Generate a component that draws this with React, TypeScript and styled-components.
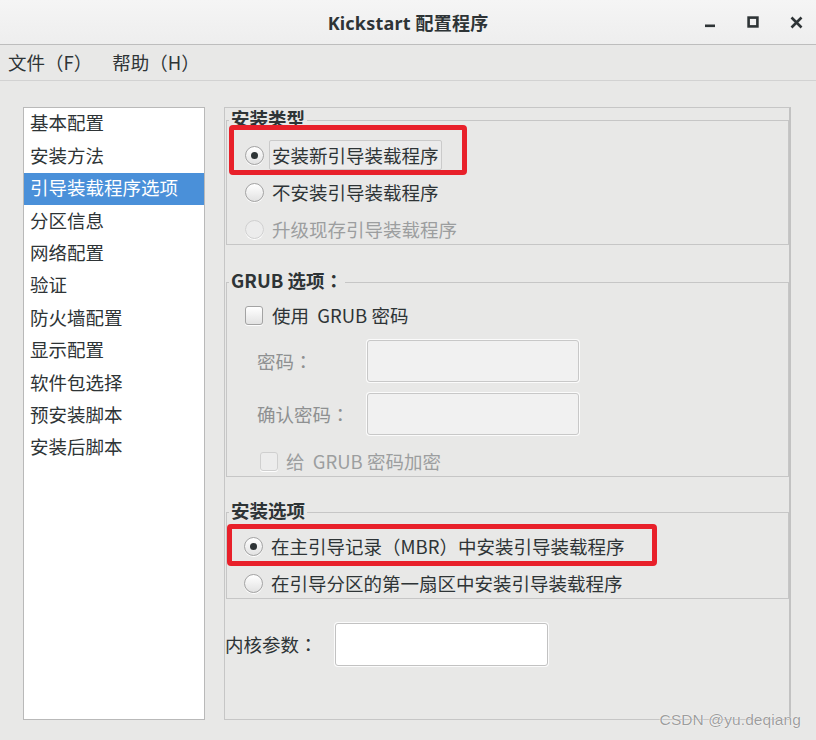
import React from 'react';
import styled, { createGlobalStyle } from 'styled-components';

const GlobalStyle = createGlobalStyle`
  html, body { margin: 0; padding: 0; }
  body {
    background: #e8e8e7;
    font-family: "Noto Sans CJK SC", "Noto Sans", sans-serif;
    color: #2e3436;
  }
`;

const Window = styled.div`
  position: relative;
  width: 816px;
  height: 740px;
  display: flex;
  flex-direction: column;
  background: #e8e8e7;
  overflow: hidden;
`;

const TitleBar = styled.div`
  flex: none;
  height: 44px;
  display: grid;
  grid-template-columns: 1fr auto 1fr;
  align-items: center;
  background: linear-gradient(#f5f5f5, #eeeeee);
  border-bottom: 1px solid #bdbdbd;
`;

const TitleText = styled.div`
  grid-column: 2;
  font-family: "Noto Sans", "Noto Sans CJK SC", sans-serif;
  font-size: 18px;
  font-weight: 700;
  color: #2e3436;
  letter-spacing: 0.2px;
`;

const Controls = styled.div`
  grid-column: 3;
  justify-self: end;
  display: flex;
  align-items: center;
  gap: 19px;
  padding-right: 8px;
`;

const ControlButton = styled.span`
  width: 24px;
  height: 24px;
  display: flex;
  align-items: center;
  justify-content: center;
  color: #2e3436;
`;

const MenuBar = styled.div`
  flex: none;
  height: 35px;
  display: flex;
  align-items: center;
  gap: 20px;
  padding-left: 8px;
  border-bottom: 1px solid #d2d2d2;
`;

const MenuItem = styled.span`
  font-size: 18.5px;
  line-height: 1;
  color: #2e3436;
`;

const Body = styled.div`
  display: flex;
  gap: 19px;
  padding: 26px 0 0 23px;
`;

const NavList = styled.div`
  width: 182px;
  height: 613px;
  box-sizing: border-box;
  background: #ffffff;
  border: 1px solid #b9b9b9;
  display: flex;
  flex-direction: column;
`;

const NavItem = styled.div<{ $selected?: boolean }>`
  height: 32.4px;
  box-sizing: border-box;
  flex: none;
  display: flex;
  align-items: center;
  padding: 0 0 3px 6px;
  font-size: 18.5px;
  line-height: 1;
  color: ${p => (p.$selected ? '#ffffff' : '#2e3436')};
  background: ${p => (p.$selected ? '#4a90d9' : 'transparent')};
`;

const Panel = styled.div`
  width: 567px;
  height: 613px;
  box-sizing: border-box;
  border: 1px solid #c6c6c6;
  border-right: 2px solid #c2c2c2;
  display: flex;
  flex-direction: column;
`;

const Frame = styled.fieldset<{ $mt?: number }>`
  margin: ${p => p.$mt ?? 0}px 0 0 1px;
  padding: 0;
  border: 1px solid #c6c6c6;
  min-width: 0;
`;

const Legend = styled.legend`
  margin-left: 2px;
  padding: 0 2px 4px;
  font-size: 18.5px;
  font-weight: 700;
  line-height: 20px;
  color: #2e3436;
`;

const Colon = styled.span`
  font-family: "Noto Sans CJK TC", "Noto Sans CJK SC", sans-serif;
`;

const FrameBody = styled.div<{ $pt: number; $gap?: number }>`
  display: flex;
  flex-direction: column;
  padding-top: ${p => p.$pt}px;
  gap: ${p => p.$gap ?? 0}px;
`;

const OptionRow = styled.div<{ $indent: number; $mt?: number; $h?: number }>`
  position: relative;
  height: ${p => p.$h ?? 30}px;
  margin-top: ${p => p.$mt ?? 0}px;
  display: flex;
  align-items: center;
  padding-left: ${p => p.$indent}px;
  font-size: 18.5px;
  line-height: 1;
`;

const Radio = styled.span<{ $checked?: boolean; $disabled?: boolean }>`
  flex: none;
  width: 19px;
  height: 19px;
  box-sizing: border-box;
  border-radius: 50%;
  border: 1px solid ${p => (p.$disabled ? '#cfcfcf' : '#a3a3a3')};
  background: ${p => (p.$disabled ? '#ececec' : 'linear-gradient(#ffffff, #e2e2e2)')};
  box-shadow: 0 1px 0 rgba(255, 255, 255, 0.9);
  display: flex;
  align-items: center;
  justify-content: center;
  &::after {
    content: '';
    display: ${p => (p.$checked ? 'block' : 'none')};
    width: 7px;
    height: 7px;
    border-radius: 50%;
    background: #2e3436;
  }
`;

const Checkbox = styled.span<{ $disabled?: boolean }>`
  flex: none;
  width: 18px;
  height: 19px;
  box-sizing: border-box;
  border-radius: 3px;
  border: 1px solid ${p => (p.$disabled ? '#cfcfcf' : '#a3a3a3')};
  background: ${p => (p.$disabled ? '#ececec' : 'linear-gradient(#ffffff, #e2e2e2)')};
  box-shadow: 0 1px 0 rgba(255, 255, 255, 0.9);
`;

const OptionText = styled.span<{ $disabled?: boolean; $gap?: number }>`
  margin-left: ${p => p.$gap ?? 8}px;
  white-space: pre;
  color: ${p => (p.$disabled ? '#9c9e9f' : '#2e3436')};
`;

const FocusBox = styled.span`
  margin-left: 5px;
  height: 30px;
  box-sizing: border-box;
  display: flex;
  align-items: center;
  padding: 0 2px;
  border: 1px solid #cacaca;
  border-radius: 2px;
  background: #ebebeb;
  color: #2e3436;
`;

const Highlight = styled.span<{ $left: number; $top: number; $w: number; $h: number }>`
  position: absolute;
  left: ${p => p.$left}px;
  top: ${p => p.$top}px;
  width: ${p => p.$w}px;
  height: ${p => p.$h}px;
  box-sizing: border-box;
  border: 5px solid #e8202a;
  border-radius: 4px;
  pointer-events: none;
`;

const FieldRow = styled.div<{ $mt: number }>`
  display: grid;
  grid-template-columns: 110px 212px;
  align-items: center;
  margin-top: ${p => p.$mt}px;
  padding-left: 30px;
`;

const FieldLabel = styled.span<{ $disabled?: boolean }>`
  font-size: 18.5px;
  line-height: 1;
  color: ${p => (p.$disabled ? '#8e9091' : '#2e3436')};
`;

const TextInput = styled.input<{ $w: number; $h: number }>`
  width: ${p => p.$w}px;
  height: ${p => p.$h}px;
  box-sizing: border-box;
  margin: 0;
  padding: 0 8px;
  border: 1px solid #c2c2c2;
  border-radius: 3px;
  background: #ffffff;
  box-shadow: 0 0 0 1px #fbfbfb;
  font: inherit;
  &:disabled {
    background: #f1f1f1;
    border-color: #c8c8c8;
  }
`;

const KernelRow = styled.div`
  display: flex;
  align-items: center;
  margin-top: 24px;
  font-size: 18.5px;
  line-height: 1;
`;

const KernelInputWrap = styled.div`
  margin-left: 17px;
  display: flex;
`;

const Watermark = styled.div`
  position: absolute;
  right: 15px;
  bottom: 11px;
  font-family: "Liberation Sans", "DejaVu Sans", sans-serif;
  font-size: 15.5px;
  color: rgba(125, 125, 125, 0.75);
  text-shadow: 0 0 1px #ffffff, 0 0 1px #ffffff;
  letter-spacing: 0.1px;
`;

const navItems = [
  '基本配置',
  '安装方法',
  '引导装载程序选项',
  '分区信息',
  '网络配置',
  '验证',
  '防火墙配置',
  '显示配置',
  '软件包选择',
  '预安装脚本',
  '安装后脚本',
];

export default function App() {
  return (
    <>
      <GlobalStyle />
      <Window>
        <TitleBar>
          <TitleText>Kickstart 配置程序</TitleText>
          <Controls>
            <ControlButton>
              <svg width="12" height="12" viewBox="0 0 12 12">
                <rect x="1" y="8.5" width="10" height="2.6" fill="currentColor" />
              </svg>
            </ControlButton>
            <ControlButton>
              <svg width="12" height="12" viewBox="0 0 12 12">
                <rect x="1.6" y="1.6" width="8.8" height="8.8" fill="none" stroke="currentColor" strokeWidth="2.6" />
              </svg>
            </ControlButton>
            <ControlButton>
              <svg width="13" height="13" viewBox="0 0 13 13">
                <path d="M1.5 1.5 L11.5 11.5 M11.5 1.5 L1.5 11.5" stroke="currentColor" strokeWidth="2.6" />
              </svg>
            </ControlButton>
          </Controls>
        </TitleBar>

        <MenuBar>
          <MenuItem>文件（F）</MenuItem>
          <MenuItem>帮助（H）</MenuItem>
        </MenuBar>

        <Body>
          <NavList>
            {navItems.map(item => (
              <NavItem key={item} $selected={item === '引导装载程序选项'}>
                {item}
              </NavItem>
            ))}
          </NavList>

          <Panel>
            <Frame>
              <Legend>安装类型</Legend>
              <FrameBody $pt={8} $gap={7}>
                <OptionRow $indent={18}>
                  <Radio $checked />
                  <FocusBox>安装新引导装载程序</FocusBox>
                  <Highlight $left={2} $top={-15} $w={238} $h={50} />
                </OptionRow>
                <OptionRow $indent={18}>
                  <Radio />
                  <OptionText>不安装引导装载程序</OptionText>
                </OptionRow>
                <OptionRow $indent={18}>
                  <Radio $disabled />
                  <OptionText $disabled>升级现存引导装载程序</OptionText>
                </OptionRow>
              </FrameBody>
            </Frame>

            <Frame $mt={25}>
              <Legend>
                GRUB 选项<Colon>：</Colon>
              </Legend>
              <FrameBody $pt={6}>
                <OptionRow $indent={18}>
                  <Checkbox />
                  <OptionText $gap={9}>{'使用  GRUB 密码'}</OptionText>
                </OptionRow>
                <FieldRow $mt={10}>
                  <FieldLabel $disabled>
                    密码<Colon>：</Colon>
                  </FieldLabel>
                  <TextInput $w={212} $h={42} disabled />
                </FieldRow>
                <FieldRow $mt={11}>
                  <FieldLabel $disabled>
                    确认密码<Colon>：</Colon>
                  </FieldLabel>
                  <TextInput $w={212} $h={42} disabled />
                </FieldRow>
                <OptionRow $indent={33} $mt={11}>
                  <Checkbox $disabled />
                  <OptionText $disabled $gap={8}>{'给  GRUB 密码加密'}</OptionText>
                </OptionRow>
              </FrameBody>
            </Frame>

            <Frame $mt={23}>
              <Legend>安装选项</Legend>
              <FrameBody $pt={7} $gap={7}>
                <OptionRow $indent={17}>
                  <Radio $checked />
                  <OptionText>在主引导记录（MBR）中安装引导装载程序</OptionText>
                  <Highlight $left={0} $top={-7} $w={430} $h={42} />
                </OptionRow>
                <OptionRow $indent={17}>
                  <Radio />
                  <OptionText>在引导分区的第一扇区中安装引导装载程序</OptionText>
                </OptionRow>
              </FrameBody>
            </Frame>

            <KernelRow>
              <span>
                内核参数<Colon>：</Colon>
              </span>
              <KernelInputWrap>
                <TextInput $w={213} $h={43} />
              </KernelInputWrap>
            </KernelRow>
          </Panel>
        </Body>

        <Watermark>CSDN @yu.deqiang</Watermark>
      </Window>
    </>
  );
}
